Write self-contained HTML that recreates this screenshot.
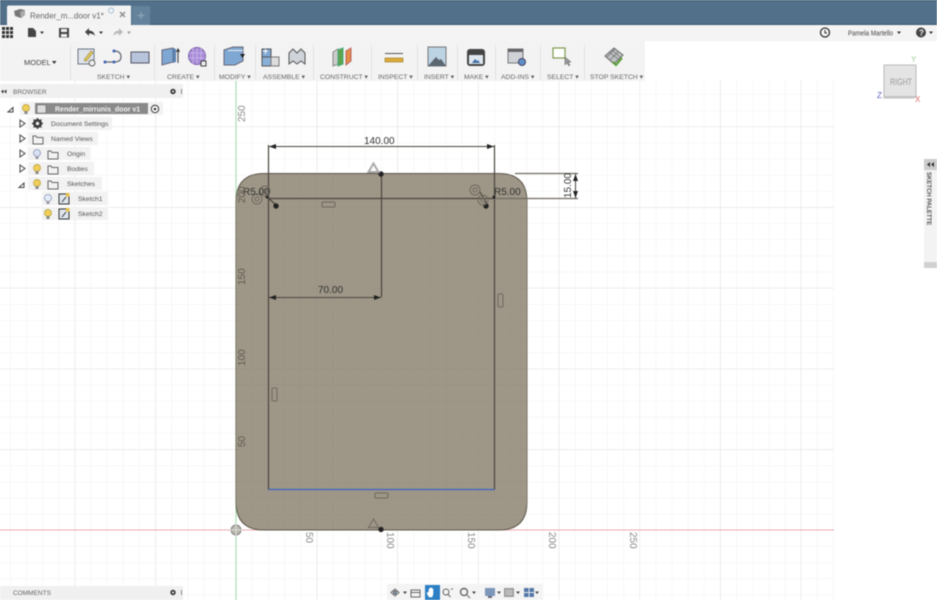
<!DOCTYPE html>
<html><head><meta charset="utf-8"><style>
html,body{margin:0;padding:0;background:#fff}
#p{position:relative;width:937px;height:600px;overflow:hidden;background:#fff;font-family:"Liberation Sans",sans-serif;filter:blur(.4px)}
#p>svg{position:absolute;left:0;top:0}
text{font-family:"Liberation Sans",sans-serif}
.l{position:absolute;font-size:6.800px;color:#666;white-space:nowrap;line-height:10px;top:73px}
</style></head><body><div id="p">
<svg width="937" height="600" viewBox="0 0 937 600">
<defs>
<pattern id="g" x="236" y="530" width="16.14" height="16.14" patternUnits="userSpaceOnUse"><path d="M0 0V16.14M0 0H16.14" stroke="#f1f1f1" stroke-width="1" fill="none"/></pattern>
<pattern id="G" x="236" y="530" width="80.7" height="80.7" patternUnits="userSpaceOnUse"><path d="M0 0V80.7M0 0H80.7" stroke="#e0e0e0" stroke-width="1" fill="none"/></pattern>
<pattern id="g2" x="236" y="530" width="16.14" height="16.14" patternUnits="userSpaceOnUse"><path d="M0 0V16.14M0 0H16.14" stroke="#999182" stroke-width="1" fill="none"/></pattern>
</defs>
<!-- canvas grid -->
<rect x="0" y="80" width="834" height="520" fill="url(#g)"/>
<rect x="0" y="80" width="834" height="520" fill="url(#G)"/>
<!-- axes -->
<path d="M236 80V600" stroke="#a9dfb5" stroke-width="1.2"/>
<path d="M0 530H834" stroke="#eaa9a9" stroke-width="1"/>
<!-- plate -->
<path d="M264 173.500H499Q527 173.500 527 201.500V502Q527 530 499 530H264Q236 530 236 502V201.500Q236 173.500 264 173.500Z" fill="#9e9687" stroke="#5c564b" stroke-width="1"/>
<path d="M264 173.500H499Q527 173.500 527 201.500V502Q527 530 499 530H264Q236 530 236 502V201.500Q236 173.500 264 173.500Z" fill="url(#g2)"/>
<!-- sketch -->
<g fill="none" stroke="#4a463e" stroke-width="1.200">
<path d="M268.500 145V489.500"/><path d="M494.500 145V489.500"/>
<path d="M268 198.500H495"/><path d="M381.500 173V297"/>
<path d="M268 146.500H494" stroke-width="1"/><path d="M268 297.500H381" stroke-width="1"/>
<path d="M515 173.500H578" stroke="#6f6b62"/><path d="M494 198.500H578" stroke="#6f6b62"/><path d="M575.500 174V198" stroke-width="1"/>
<path d="M266 196L276 205" /><path d="M480 192L487 204" />
</g>
<path d="M268.500 489.500H494.500" stroke="#3d63c4" stroke-width="1.300"/>
<g fill="#222">
<path d="M269 146.500l7-2.500v5z"/><path d="M494 146.500l-7-2.500v5z"/>
<path d="M269 297.500l7-2.500v5z"/><path d="M381 297.500l-7-2.500v5z"/>
<path d="M575.500 174l-2.500 7h5z"/><path d="M575.500 198l-2.500-7h5z"/>
<circle cx="381" cy="174" r="2.700"/><circle cx="381" cy="529.500" r="2.700"/><circle cx="276" cy="206" r="2.700"/><circle cx="486" cy="206" r="2.700"/><circle cx="267" cy="197" r="1.500"/><circle cx="494" cy="197" r="1.500"/>
</g>
<!-- constraints -->
<g fill="none" stroke="#6f6a5f" stroke-width="1">
<rect x="322" y="202" width="13" height="5" rx="1"/><rect x="375" y="493" width="13" height="5" rx="1"/>
<rect x="272" y="388" width="5" height="13" rx="1"/><rect x="498" y="294" width="5" height="13" rx="1"/>
<circle cx="265" cy="191" r="5"/><circle cx="265" cy="191" r="2"/>
<circle cx="257" cy="199" r="5"/><circle cx="257" cy="199" r="2"/>
<circle cx="475" cy="190" r="5"/><circle cx="475" cy="190" r="2"/>
<circle cx="483" cy="200" r="5"/><circle cx="483" cy="200" r="2"/>
<path d="M373.500 163.500l5 8.500h-10z" stroke="#aaa" stroke-width="2"/>
<path d="M373.500 519l5 8.500h-10z"/>
</g>
<!-- origin -->
<circle cx="236" cy="530" r="5" fill="#b9b6ad" stroke="#888" stroke-width="1"/>
<path d="M236 524V536M230 530H242" stroke="#ddd" stroke-width="1"/>
<!-- dims -->
<g fill="#333" font-size="10">
<text x="364" y="144">140.00</text><text x="318" y="293">70.00</text>
<text x="243" y="195">R5.00</text><text x="494" y="195">R5.00</text>
<text transform="translate(571,198) rotate(-90)">15.00</text>
</g>
<!-- axis labels -->
<g fill="#8a8a8a" font-size="10">
<text transform="translate(245,122) rotate(-90)">250</text>
<text transform="translate(315,532) rotate(90)" style="display:none"></text>
<text transform="translate(306,532) rotate(90)">50</text>
<text transform="translate(387,532) rotate(90)">100</text>
<text transform="translate(468,532) rotate(90)">150</text>
<text transform="translate(549,532) rotate(90)">200</text>
<text transform="translate(630,532) rotate(90)">250</text>
</g>
<g fill="#5f5b51" font-size="10">
<text transform="translate(245,203) rotate(-90)">200</text>
<text transform="translate(245,285) rotate(-90)">150</text>
<text transform="translate(245,366) rotate(-90)">100</text>
<text transform="translate(245,447) rotate(-90)">50</text>
</g>

<!-- title bar -->
<rect x="0" y="0" width="937" height="25" fill="#527089"/>
<rect x="0" y="0" width="937" height="1" fill="#3d5870"/>
<rect x="0" y="24" width="937" height="1" fill="#3f5a72"/>
<path d="M7 25V7Q7 5.500 9 5.500H131V25Z" fill="#f3f3f3"/>
<rect x="132" y="6" width="18" height="19" fill="#64829b"/>
<path d="M141 12V19M137.500 15.500H144.500" stroke="#87a0b4" stroke-width="1.500"/>
<path d="M14 11l6-2 5 1v5l-4 3-6-2z" fill="#777"/><path d="M20 12l5-2v5l-4 3z" fill="#aaa"/>
<text x="30" y="18.500" font-size="8" fill="#666">Render_m...door v1*</text>
<circle cx="111" cy="10.500" r="2.500" fill="none" stroke="#9fc3d6" stroke-width="1"/>
<path d="M120 12l5 5M125 12l-5 5" stroke="#888" stroke-width="1.300"/>
<!-- quick toolbar -->
<rect x="0" y="25" width="937" height="16" fill="#f4f4f4"/>
<g fill="#333"><rect x="2" y="27" width="3" height="3"/><rect x="6" y="27" width="3" height="3"/><rect x="10" y="27" width="3" height="3"/><rect x="2" y="31" width="3" height="3"/><rect x="6" y="31" width="3" height="3"/><rect x="10" y="31" width="3" height="3"/><rect x="2" y="35" width="3" height="3"/><rect x="6" y="35" width="3" height="3"/><rect x="10" y="35" width="3" height="3"/>
<path d="M28 28h5l3 3v6h-8z" fill="#444"/><path d="M40 31.500h4l-2 2.500z"/>
<path d="M59 28h10v9.500H59z" fill="#444"/><rect x="61" y="29" width="6" height="3" fill="#eee"/><rect x="61" y="34" width="6" height="3" fill="#eee"/>
<path d="M85 32l4-4v2.500q5 0 6 5.500q-2-2.500-6-2.500V36z" fill="#444"/><path d="M99 31.500h4l-2 2.500z"/>
<path d="M123 32l-4-4v2.500q-5 0-6 5.500q2-2.500 6-2.500V36z" fill="#bbb"/><path d="M127 31.500h4l-2 2.500z" fill="#999"/>
</g>
<circle cx="825" cy="32.500" r="4.500" fill="none" stroke="#333" stroke-width="1.300"/><path d="M825 30v3h2" stroke="#333" fill="none"/>
<text x="848" y="35.500" font-size="7" fill="#444" textLength="45" lengthAdjust="spacingAndGlyphs">Pamela Martello</text><path d="M897 31.500h4l-2 2.500z" fill="#333"/>
<circle cx="921" cy="32.500" r="5" fill="#444"/><text x="919" y="35.500" font-size="8" font-weight="bold" fill="#fff">?</text><path d="M929 31.500h4l-2 2.500z" fill="#333"/>

<!-- ribbon -->
<rect x="0" y="41" width="645" height="40" fill="#f3f3f3"/>
<g stroke="#e2e2e2" stroke-width="1"><path d="M70.500 45V80M154.500 45V80M214.500 45V80M255.500 45V80M313.500 45V80M371.500 45V80M417.500 45V80M457.500 45V80M495.500 45V80M540.500 45V80M584.500 45V80"/></g>
<!-- sketch icons -->
<rect x="78" y="49" width="16" height="15" fill="#dfe3ea" stroke="#6d7685"/><path d="M84 60l7-9 2 1.500-7 9z" fill="#e6c95a" stroke="#8a7a30" stroke-width=".6"/><circle cx="92" cy="63" r="3" fill="#eee" stroke="#666"/>
<path d="M105 62H114Q121 62 121 57Q121 51 114 51" fill="none" stroke="#667" stroke-width="1.200"/><circle cx="105" cy="62" r="1.500" fill="#3d62b0"/><circle cx="114" cy="62" r="1.500" fill="#3d62b0"/><circle cx="114" cy="51" r="1.500" fill="#3d62b0"/>
<rect x="131" y="52" width="18" height="11" fill="#b8c4da" stroke="#556"/>
<!-- create -->
<path d="M162 50l11-2v14l-11 3z" fill="#7fa7d3" stroke="#667"/><path d="M173 48l3 1v13l-3 1z" fill="#5a83b2"/><path d="M178 63V50M176.500 52l1.500-3 1.500 3" stroke="#333" fill="none"/>
<circle cx="197" cy="56" r="8.500" fill="#a98bd8" stroke="#7a62a8"/><path d="M189 53H205M189 58H205M193 48V64M197 48V64M201 48V64" stroke="#c9b8ea" stroke-width=".8"/><rect x="201" y="61" width="5" height="5" fill="#eee" stroke="#444"/>
<!-- modify -->
<path d="M224 50l9-3 10 0v14l-8 4h-11z" fill="#7fa7d3" stroke="#667"/><path d="M228 50h15v1h-15z" fill="#eee"/><path d="M240 54h5l-2.500 4z" fill="#222"/>
<!-- assemble -->
<rect x="262" y="49" width="9" height="9" fill="#7fa7d3" stroke="#555"/><rect x="262" y="57" width="9" height="9" fill="#8bb0d8" stroke="#555"/><rect x="271" y="57" width="8" height="9" fill="#ddd" stroke="#777"/><path d="M263 51h5M265.500 49v5" stroke="#fff"/>
<path d="M289 64V53l4-4 4 4 4-4 4 4v11l-4-3-4 3-4-3z" fill="#cfd4da" stroke="#555"/>
<!-- construct -->
<path d="M333 52l5-3v15l-5 2z" fill="#ccc" stroke="#888"/><path d="M338 50l5-2v16l-5 2z" fill="#5fa34e" stroke="#4a7"/><path d="M346 51l5-3v13l-5 4z" fill="#e58b45" stroke="#b66"/>
<!-- inspect -->
<path d="M385 53.500H403" stroke="#555"/><rect x="385" y="58" width="18" height="4" fill="#d9a93b" stroke="#9a7a20" stroke-width=".6"/>
<!-- insert -->
<rect x="428" y="47" width="18" height="19" fill="#bcd3e4" stroke="#777"/><path d="M428 66l8-9 3 3 2-1 5 7z" fill="#5c6670"/>
<!-- make -->
<rect x="467" y="49" width="18" height="17" rx="3" fill="#444"/><rect x="469" y="55" width="14" height="9" fill="#dfe6ee"/><path d="M472 63l3-4 2 2 1-1 2 3z" fill="#3f70a8"/>
<!-- addins -->
<rect x="508" y="49" width="15" height="14" fill="#cfd3d8" stroke="#777"/><rect x="508" y="49" width="15" height="3" fill="#666"/><circle cx="522" cy="62" r="3.500" fill="#5f8fc9" stroke="#446"/>
<!-- select -->
<rect x="553" y="48" width="12" height="10" fill="#fff" stroke="#7f9a52" stroke-width="1.200"/><path d="M565 57l0 8 2-2 2 3 1-1-2-3h3z" fill="#999" stroke="#555" stroke-width=".5"/>
<!-- stop -->
<path d="M605 56l9-8 9 7-9 9z" fill="#bfc2c4" stroke="#666"/><path d="M609 52l9 7M612 50l8 7M610 60l8-8M607 57l8-8" stroke="#666" stroke-width=".6"/><path d="M613 62l3 3 6-7" stroke="#58a034" stroke-width="2" fill="none"/>

<!-- browser header -->
<rect x="0" y="84" width="183" height="14" fill="#f0f0f0"/>
<path d="M1 91.500l2.500-2v4zM4 91.500l2.500-2v4z" fill="#333"/>
<circle cx="173" cy="91.500" r="2.700" fill="#333"/><circle cx="173" cy="91.500" r="1" fill="#fff"/><path d="M181.500 89v5" stroke="#888"/>
<text x="13" y="94" font-size="6.500" fill="#666">BROWSER</text>
<!-- tree -->
<rect x="20" y="102" width="143" height="13" fill="#f2f2f2"/>
<rect x="35" y="103" width="113" height="11" fill="#8a8a8a"/>
<rect x="37" y="105" width="9" height="8" rx="1" fill="#ddd" stroke="#666" stroke-width=".6"/>
<text x="55" y="111.500" font-size="7" font-weight="bold" fill="#f3f3f3">Render_mirrunis_door v1</text>
<circle cx="155" cy="109" r="3.700" fill="#fff" stroke="#333"/><circle cx="155" cy="109" r="1.300" fill="#333"/>
<path d="M8 112l5-4.500V112z" fill="none" stroke="#444" stroke-width="1"/>
<rect x="28" y="117" width="84" height="13" fill="#f2f2f2"/>
<rect x="28" y="132" width="70" height="13" fill="#f2f2f2"/>
<rect x="28" y="147" width="62" height="13" fill="#f2f2f2"/>
<rect x="28" y="162" width="66" height="13" fill="#f2f2f2"/>
<rect x="28" y="177" width="74" height="13" fill="#f2f2f2"/>
<rect x="42" y="192" width="66" height="13" fill="#f2f2f2"/>
<rect x="42" y="207" width="66" height="13" fill="#f2f2f2"/>
<g fill="none" stroke="#444" stroke-width="1">
<path d="M20 120l5 3.500-5 3.500z"/><path d="M20 135l5 3.500-5 3.500z"/><path d="M20 150l5 3.500-5 3.500z"/><path d="M20 165l5 3.500-5 3.500z"/><path d="M19 187.500l5-4.500v4.500z"/>
<path d="M33 136h3l1 1.500h6V144H33z" stroke="#666"/><path d="M48 151h3l1 1.500h6V159H48z" stroke="#666"/><path d="M48 166h3l1 1.500h6V174H48z" stroke="#666"/><path d="M48 181h3l1 1.500h6V189H48z" stroke="#666"/>
</g>
<circle cx="37.500" cy="123.500" r="3.500" fill="none" stroke="#333" stroke-width="2"/>
<path d="M37.500 118V129M32 123.500H43M33.500 119.500l8 8M41.500 119.500l-8 8" stroke="#333" stroke-width="1.200"/><circle cx="37.500" cy="123.500" r="1.500" fill="#fff"/>
<g>
<circle cx="26" cy="108" r="3.500" fill="#efcf5a" stroke="#b6982f" stroke-width=".7"/><rect x="24.500" y="111" width="3" height="3" fill="#888"/>
<circle cx="37" cy="153" r="3.500" fill="#d9e2f2" stroke="#8595bb" stroke-width=".8"/><rect x="35.500" y="156" width="3" height="3" fill="#99a"/>
<circle cx="37" cy="168" r="3.500" fill="#efcf5a" stroke="#b6982f" stroke-width=".7"/><rect x="35.500" y="171" width="3" height="3" fill="#888"/>
<circle cx="37" cy="183" r="3.500" fill="#efcf5a" stroke="#b6982f" stroke-width=".7"/><rect x="35.500" y="186" width="3" height="3" fill="#888"/>
<circle cx="48" cy="198" r="3.500" fill="#e6ecf6" stroke="#8595bb" stroke-width=".8"/><rect x="46.500" y="201" width="3" height="3" fill="#99a"/>
<circle cx="48" cy="213" r="3.500" fill="#efcf5a" stroke="#b6982f" stroke-width=".7"/><rect x="46.500" y="216" width="3" height="3" fill="#888"/>
<rect x="59" y="194" width="10" height="10" fill="#dfe6ee" stroke="#333"/><path d="M62 202l4-5" stroke="#333"/><rect x="66" y="193" width="3.500" height="3.500" fill="#e8c23f"/>
<rect x="59" y="209" width="10" height="10" fill="#dfe6ee" stroke="#333"/><path d="M62 217l4-5" stroke="#333"/><rect x="66" y="208" width="3.500" height="3.500" fill="#e8c23f"/>
</g>
<g font-size="6.800" fill="#555">
<text x="51" y="126">Document Settings</text><text x="51" y="141">Named Views</text><text x="67" y="156">Origin</text><text x="67" y="171">Bodies</text><text x="67" y="186">Sketches</text><text x="78" y="201">Sketch1</text><text x="78" y="216">Sketch2</text>
</g>

<!-- view cube -->
<path d="M884 65H916V97L913 98H884Z" fill="#e4e4e4" stroke="#bbb"/>
<path d="M884 96H916V98H884Z" fill="#c4c4c4"/>
<text x="890" y="85" font-size="9" fill="#999" textLength="22" lengthAdjust="spacingAndGlyphs">RIGHT</text>
<text x="911" y="62" font-size="8" fill="#9ed3a0">Y</text>
<text x="877" y="98" font-size="8" fill="#5a5fc0">Z</text>
<text x="915" y="102" font-size="8" fill="#e06a6a">X</text>

<!-- palette -->
<rect x="924" y="159" width="13" height="109" fill="#f3f3f3"/>
<rect x="924" y="159" width="13" height="11" fill="#ccc"/>
<rect x="924" y="262" width="13" height="6" fill="#d0d0d0"/>
<path d="M927 164.500l3-2.500v5zM931 164.500l3-2.500v5z" fill="#333"/>
<text transform="translate(927,172) rotate(90)" font-size="6" font-weight="bold" fill="#555">SKETCH PALETTE</text>

<!-- comments -->
<rect x="0" y="586" width="183" height="14" fill="#f0f0f0"/>
<text x="13" y="595" font-size="6.500" fill="#666">COMMENTS</text>
<circle cx="173" cy="592.500" r="2.700" fill="#333"/><circle cx="173" cy="592.500" r="1" fill="#fff"/><path d="M181.500 590v5" stroke="#888"/>

<!-- nav bar -->
<rect x="387" y="584" width="156" height="16" fill="#f4f4f4"/>
<rect x="425" y="585" width="15" height="15" fill="#2c7fc4"/>
<path d="M429 592v-3h1v3-4h1v4-4h1v4-3h1v5l-1 3h-3l-2-4z" fill="#fff" stroke="#fff" stroke-width=".6"/>
<g fill="none" stroke="#666" stroke-width="1">
<path d="M395 589l4 3.500-4 3.500-4-3.500z"/><circle cx="395" cy="592.500" r="1.500" fill="#7fa7d3"/>
<rect x="411" y="590" width="9" height="7"/><path d="M411 592.500h9"/>
<circle cx="446" cy="592" r="3"/><path d="M448 594.500l2.500 2.500M451 589h2"/>
<circle cx="464" cy="592" r="3.500" stroke-width="1.400"/><path d="M467 595l3 3"/>
</g>
<rect x="485" y="588" width="10" height="8" fill="#7d97ba"/><rect x="488" y="596" width="4" height="2" fill="#667"/>
<rect x="504" y="588" width="10" height="9" fill="#9a9a9a"/><rect x="505.500" y="589.500" width="7" height="6" fill="#bbb"/>
<rect x="524" y="588" width="10" height="9" fill="#5577a8"/><path d="M529 588v9M524 592.500h10" stroke="#dfe6ee"/>
<g fill="#444"><path d="M403 591.500h4l-2 2.500z"/><path d="M472 591.500h4l-2 2.500z"/><path d="M497 591.500h4l-2 2.500z"/><path d="M516 591.500h4l-2 2.500z"/><path d="M535 591.500h4l-2 2.500z"/></g>
</svg>
<div class="l" style="left:24px;top:58px;font-size:7.500px;color:#444">MODEL</div>
<svg style="left:52px;top:61px" width="5" height="4"><path d="M0 0h4.500L2.250 3z" fill="#333"/></svg>
<div class="l" style="left:97px">SKETCH ▾</div>
<div class="l" style="left:167px">CREATE ▾</div>
<div class="l" style="left:219px">MODIFY ▾</div>
<div class="l" style="left:263px">ASSEMBLE ▾</div>
<div class="l" style="left:320px">CONSTRUCT ▾</div>
<div class="l" style="left:378px">INSPECT ▾</div>
<div class="l" style="left:424px">INSERT ▾</div>
<div class="l" style="left:464px">MAKE ▾</div>
<div class="l" style="left:501px">ADD-INS ▾</div>
<div class="l" style="left:547px">SELECT ▾</div>
<div class="l" style="left:590px">STOP SKETCH ▾</div>
</div></body></html>
